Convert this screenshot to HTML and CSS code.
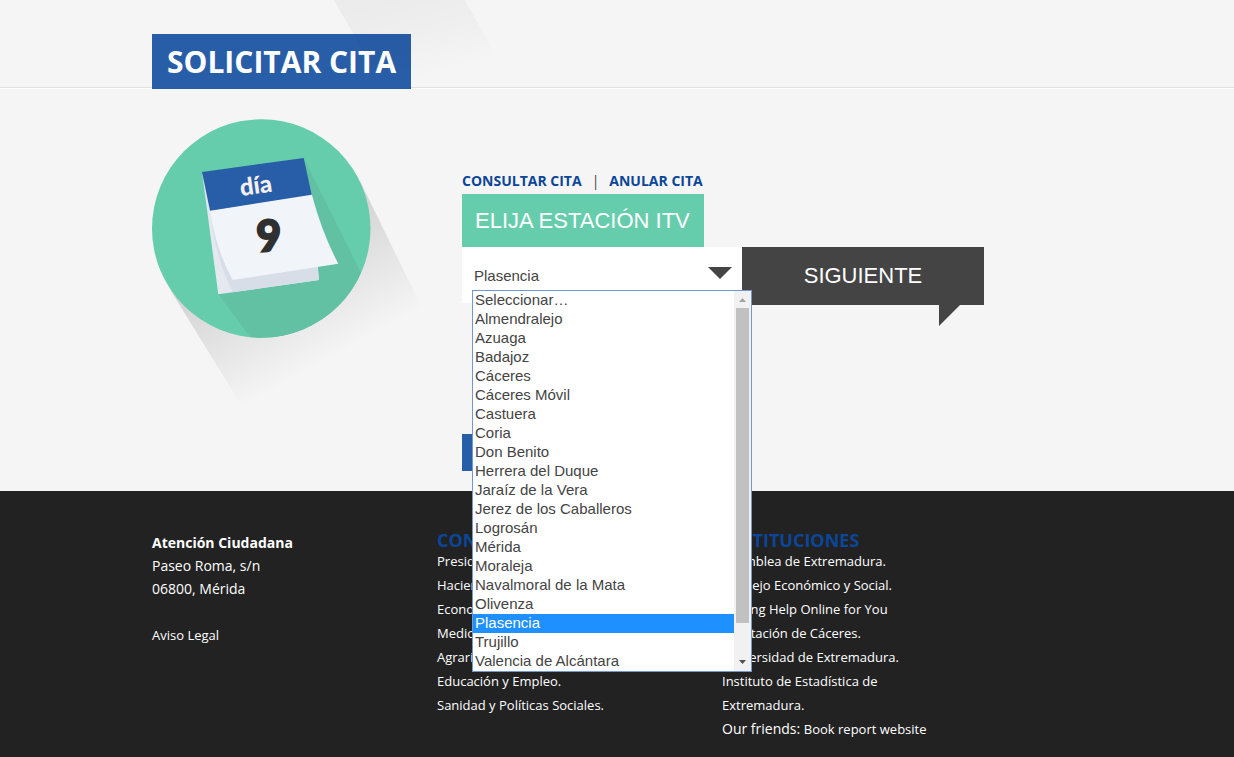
FILE: index.html
```html
<!DOCTYPE html>
<html lang="es">
<head>
<meta charset="utf-8">
<meta name="viewport" content="width=device-width, initial-scale=1">
<title>Solicitar cita</title>
<link rel="stylesheet" href="styles.css">
</head>
<body>
<header class="band">
  <div class="container band-inner">
    <h1 class="title">SOLICITAR CITA</h1>
    <svg class="band-shadow" width="180" height="86" viewBox="0 0 180 86" aria-hidden="true">
      <defs>
        <linearGradient id="bandFade" gradientUnits="userSpaceOnUse" x1="60" y1="0" x2="82" y2="80">
          <stop offset="0" stop-color="#000" stop-opacity=".04"/>
          <stop offset=".5" stop-color="#000" stop-opacity=".024"/>
          <stop offset="1" stop-color="#000" stop-opacity="0"/>
        </linearGradient>
      </defs>
      <path d="M0 0H131L178 84H48Z" fill="url(#bandFade)"/>
    </svg>
  </div>
</header>

<main class="page">
  <div class="container booking">
    <svg class="calendar" width="280" height="292" viewBox="0 0 280 292" role="img" aria-label="Calendario, día 9">
      <defs>
        <linearGradient id="longFade" gradientUnits="userSpaceOnUse" x1="82" y1="147" x2="144" y2="259">
          <stop offset="0" stop-color="#000" stop-opacity=".14"/>
          <stop offset="1" stop-color="#000" stop-opacity="0"/>
        </linearGradient>
        <clipPath id="disc"><circle cx="109.250" cy="109.500" r="109.250"/></clipPath>
      </defs>
      <path d="M208 62L269 187L91 289L19 172L110 109Z" fill="url(#longFade)"/>
      <circle cx="109.250" cy="109.500" r="109.250" fill="#66cdac"/>
      <path d="M151.700 39L216 168L130 260L66 175Z" fill="#61c1a2" clip-path="url(#disc)"/>
      <path d="M50 53L66.300 175.300L167 161L165 140L60 90Z" fill="#e4e9f0"/>
      <path d="M58 91Q63 138 80.700 173.200L167 161L165 140Z" fill="#d7dee8"/>
      <path d="M58 91.500Q64 131 80.700 161L186.300 144.700Q170 114 159.700 75Z" fill="#f1f5f9"/>
      <path d="M50 53L151.700 39L159.700 75.700L58 91.700Z" fill="#285ea8"/>
      <text class="cal-word" x="89" y="77" transform="rotate(-8 89 77)">día</text>
      <text class="cal-num" x="106" y="133" transform="rotate(-5 106 133)">9</text>
    </svg>

    <form class="form">
      <nav class="links">
        <a href="#consultar">CONSULTAR CITA</a>
        <span>|</span>
        <a href="#anular">ANULAR CITA</a>
      </nav>
      <label class="field-label" for="station">ELIJA ESTACIÓN ITV</label>
      <div class="row">
        <div class="field">
          <select class="select" id="station">
            <option>Plasencia</option>
          </select>
          <svg class="arrow" width="24" height="12" viewBox="0 0 24 12" aria-hidden="true"><path d="M0 0H24L12 12Z" fill="#444"/></svg>
          <div class="dropdown">
            <ul class="options" role="listbox" aria-label="Estaciones ITV">
              <li role="option">Seleccionar…</li>
              <li role="option">Almendralejo</li>
              <li role="option">Azuaga</li>
              <li role="option">Badajoz</li>
              <li role="option">Cáceres</li>
              <li role="option">Cáceres Móvil</li>
              <li role="option">Castuera</li>
              <li role="option">Coria</li>
              <li role="option">Don Benito</li>
              <li role="option">Herrera del Duque</li>
              <li role="option">Jaraíz de la Vera</li>
              <li role="option">Jerez de los Caballeros</li>
              <li role="option">Logrosán</li>
              <li role="option">Mérida</li>
              <li role="option">Moraleja</li>
              <li role="option">Navalmoral de la Mata</li>
              <li role="option">Olivenza</li>
              <li role="option" class="selected" aria-selected="true">Plasencia</li>
              <li role="option">Trujillo</li>
              <li role="option">Valencia de Alcántara</li>
            </ul>
            <div class="scrollbar" aria-hidden="true">
              <svg width="17" height="17" viewBox="0 0 17 17"><path d="M5 11L8.500 7L12 11Z" fill="#a3a3a3"/></svg>
              <div class="thumb"></div>
              <svg width="17" height="17" viewBox="0 0 17 17"><path d="M5 6L8.500 10L12 6Z" fill="#505050"/></svg>
            </div>
          </div>
        </div>
        <button class="next" type="button">SIGUIENTE</button>
      </div>
      <button class="back" type="button" aria-label="Volver"></button>
    </form>
  </div>
</main>

<footer class="footer">
  <div class="container columns">
    <address class="contact">
      <strong>Atención Ciudadana</strong><br>
      Paseo Roma, s/n<br>
      06800, Mérida<br><br>
      <a href="#legal">Aviso Legal</a>
    </address>
    <section>
      <h2>CONSEJERÍAS</h2>
      <ul class="list">
        <li><a href="#p">Presidencia.</a></li>
        <li><a href="#h">Hacienda y Administración.</a></li>
        <li><a href="#e">Economía e Infraestructuras.</a></li>
        <li><a href="#m">Medio Ambiente y Rural, Políticas Agrarias y Territorio.</a></li>
        <li><a href="#ed">Educación y Empleo.</a></li>
        <li><a href="#s">Sanidad y Políticas Sociales.</a></li>
      </ul>
    </section>
    <section>
      <h2>INSTITUCIONES</h2>
      <ul class="list">
        <li><a href="#a">Asamblea de Extremadura.</a></li>
        <li><a href="#c">Consejo Económico y Social.</a></li>
        <li><a href="#w">Writing Help Online for You</a></li>
        <li><a href="#d">Diputación de Cáceres.</a></li>
        <li><a href="#u">Universidad de Extremadura.</a></li>
        <li><a href="#i">Instituto de Estadística de Extremadura.</a></li>
        <li class="friends">Our friends: <a href="#b">Book report website</a></li>
      </ul>
    </section>
  </div>
</footer>
</body>
</html>
```

FILE: styles.css
```css
* { box-sizing: border-box; }

body {
  margin: 0;
  background: #222;
  font-family: "Open Sans", sans-serif;
  font-size: 14px;
  color: #444;
}

a { text-decoration: none; }

.container {
  max-width: 930px;
  margin: 0 auto;
}

/* Title band */
.band {
  position: relative;
  z-index: 1;
  background: #f5f5f5;
  border-bottom: 1px solid #e0e0e0;
  box-shadow: 0 1px 0 #fff;
}

.band-inner {
  position: relative;
  padding-top: 34px;
}

.title {
  position: relative;
  width: fit-content;
  margin: 0 0 -2px;
  padding: 8px 15px 7px;
  background: #285ea8;
  color: #fff;
  font-size: 30px;
  line-height: 40px;
  font-weight: 700;
}

.band-shadow {
  position: absolute;
  top: 0;
  left: 182px;
}

/* Booking form */
.page { background: #f5f5f5; }

.booking {
  display: flex;
  gap: 30px;
  padding: 31px 0 20px;
}

.calendar { flex: none; }

.cal-word,
.cal-num {
  font-family: Lato, sans-serif;
  font-weight: 900;
}

.cal-word {
  font-size: 24px;
  fill: #f5efef;
}

.cal-num {
  font-size: 43px;
  fill: #303030;
  stroke: #303030;
  stroke-width: 2px;
}

.form {
  flex: 1;
  padding-top: 49px;
}

.links {
  display: flex;
  gap: 10px;
  line-height: 26px;
}

.links a {
  color: #0b4698;
  font-weight: 700;
}

.field-label {
  display: block;
  width: fit-content;
  padding: 0 14px 0 13px;
  background: #66cdac;
  color: #fff;
  font: 22px/53px "Liberation Sans", Arial, sans-serif;
}

.row {
  display: flex;
  align-items: flex-start;
}

.field {
  position: relative;
  width: 280px;
}

.select {
  display: block;
  appearance: none;
  width: 100%;
  height: 56px;
  padding: 1px 40px 0 12px;
  border: 0;
  border-radius: 0;
  background: #fff;
  color: #444;
  font: 15px "Liberation Sans", Arial, sans-serif;
}

.arrow {
  position: absolute;
  top: 20px;
  right: 10px;
}

.dropdown {
  position: absolute;
  top: 43px;
  left: 10px;
  width: 280px;
  z-index: 2;
  display: flex;
  border: 1px solid #7397d3;
  background: #fff;
}

.options {
  flex: 1;
  margin: 0;
  padding: 0;
  list-style: none;
  font: 15px/17px "Liberation Sans", Arial, sans-serif;
}

.options li { padding: 0 0 2px 2px; }

.options .selected {
  background: #1e90ff;
  color: #fff;
}

.scrollbar {
  width: 17px;
  display: flex;
  flex-direction: column;
  background: #f1f1f1;
}

.scrollbar svg { flex: none; }

.thumb {
  height: 315px;
  margin: 0 2px auto;
  background: #c1c1c1;
}

.next {
  position: relative;
  width: 242px;
  height: 58px;
  padding: 0;
  border: 0;
  background: #444;
  color: #fff;
  font: 22px "Liberation Sans", Arial, sans-serif;
}

.next::after {
  content: "";
  position: absolute;
  top: 100%;
  right: 24px;
  border-top: 21px solid #444;
  border-right: 21px solid transparent;
}

.back {
  display: block;
  width: 100px;
  height: 37px;
  margin-top: 129px;
  border: 0;
  background: #285ea8;
}

/* Footer */
.footer {
  background: #222;
  color: #fff;
  padding: 38px 0 16px;
}

.footer a {
  color: #fff;
  font-size: 13px;
}

.columns {
  display: grid;
  grid-template-columns: repeat(3, minmax(0, 230px));
  gap: 55px;
}

.contact {
  padding-top: 2px;
  font-style: normal;
  line-height: 23px;
}

.footer h2 {
  margin: 0;
  padding-top: 2px;
  color: #0b4698;
  font-size: 18px;
  line-height: 18px;
}

.list {
  margin: 0;
  padding: 0;
  list-style: none;
  font-size: 13px;
  line-height: 24px;
}

.friends { font-size: 14px; }
```
